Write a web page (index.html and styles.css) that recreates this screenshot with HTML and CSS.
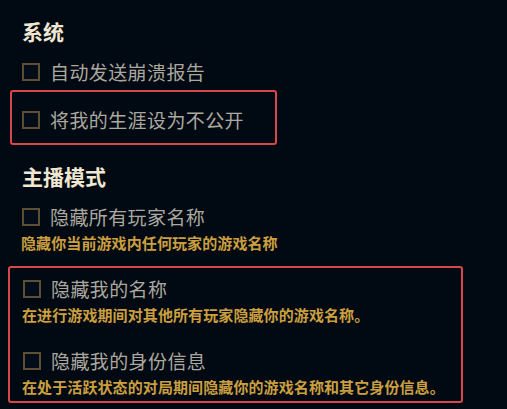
FILE: index.html
```html
<!DOCTYPE html>
<html lang="zh-CN">
<head>
<meta charset="utf-8">
<title>设置</title>
<link rel="stylesheet" href="styles.css">
</head>
<body>
<div class="panel">
  <h2 class="heading heading-first">系统</h2>
  <div class="option option-first">
    <span class="checkbox"></span>
    <span class="label">自动发送崩溃报告</span>
  </div>
  <div class="highlight highlight-small">
    <div class="option">
      <span class="checkbox"></span>
      <span class="label">将我的生涯设为不公开</span>
    </div>
  </div>

  <h2 class="heading heading-second">主播模式</h2>
  <div class="option option-first">
    <span class="checkbox"></span>
    <span class="label">隐藏所有玩家名称</span>
  </div>
  <p class="desc">隐藏你当前游戏内任何玩家的游戏名称</p>

  <div class="highlight highlight-large">
    <div class="option">
      <span class="checkbox"></span>
      <span class="label">隐藏我的名称</span>
    </div>
    <p class="desc">在进行游戏期间对其他所有玩家隐藏你的游戏名称。</p>
    <div class="option option-spaced">
      <span class="checkbox"></span>
      <span class="label">隐藏我的身份信息</span>
    </div>
    <p class="desc">在处于活跃状态的对局期间隐藏你的游戏名称和其它身份信息。</p>
  </div>
</div>
</body>
</html>
```

FILE: styles.css
```css
html, body {
  margin: 0;
  padding: 0;
  background: #010a13;
}

body {
  width: 507px;
  height: 409px;
  overflow: hidden;
  font-family: "Noto Sans CJK SC", "Noto Sans", sans-serif;
}

.panel {
  padding: 17px 0 0 22px;
}

.heading {
  margin: 0;
  font-size: 21px;
  line-height: 28px;
  font-weight: 700;
  color: #f0e6d2;
}

.heading-second {
  margin-top: 17px;
}

.option {
  display: flex;
  align-items: center;
  height: 24px;
  gap: 10px;
}

.option-first {
  margin-top: 15px;
}

.checkbox {
  box-sizing: border-box;
  width: 18px;
  height: 18px;
  flex: none;
  border: 2px solid #5e4f33;
  background: #030d1a;
}

.label {
  font-size: 19px;
  line-height: 24px;
  color: #aca89f;
  letter-spacing: 0.4px;
}

.desc {
  margin: 4px 0 0 -1px;
  font-size: 15px;
  line-height: 20px;
  font-weight: 700;
  color: #cc9f3f;
  letter-spacing: 0.1px;
}

.highlight {
  box-sizing: border-box;
  border: 2px solid #d8474a;
  border-radius: 3px;
}

.highlight-small {
  width: 267px;
  margin: 6px 0 0 -12px;
  padding: 16px 0 11px 10px;
}

.highlight-large {
  width: 455px;
  margin: 13px 0 0 -14px;
  padding: 9px 0 4px 13px;
}

.highlight-large .desc {
  margin-top: 4px;
}

.option-spaced {
  margin-top: 24px;
}
```
